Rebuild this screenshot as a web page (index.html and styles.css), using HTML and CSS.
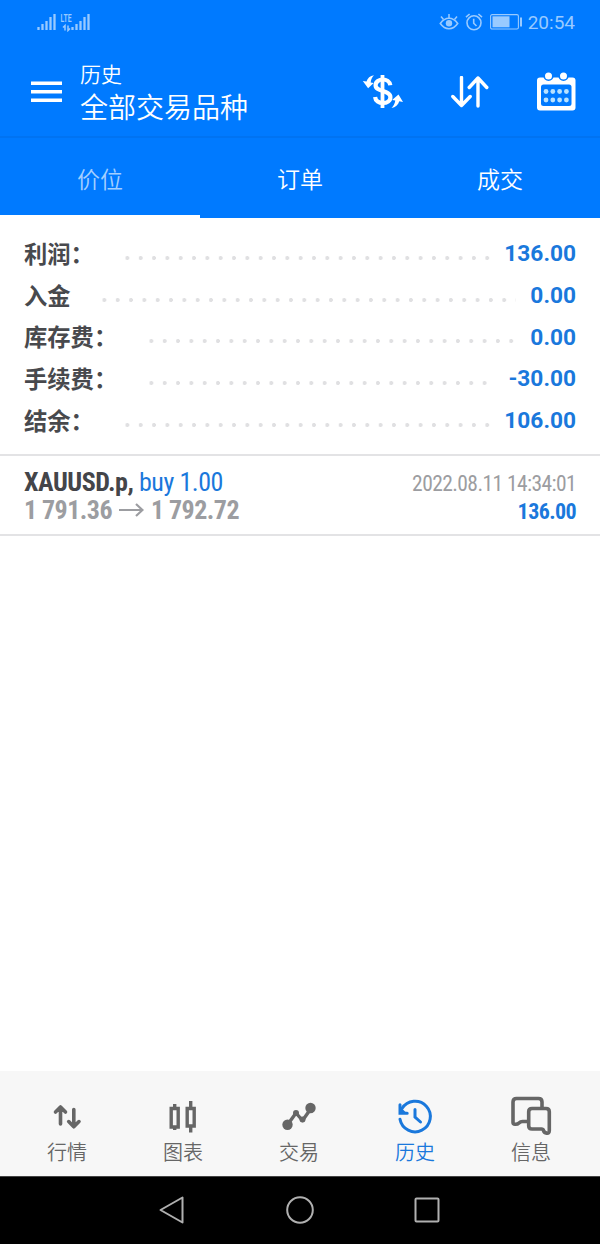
FILE: index.html
```html
<!DOCTYPE html>
<html lang="zh-CN">
<head>
    <meta charset="UTF-8">
    <meta name="viewport" content="width=device-width, initial-scale=1.0">
    <title>历史</title>
    <link rel="stylesheet" href="styles.css">
</head>
<body>

<div class="status-bar">
    <svg class="signal" width="54" height="20" viewBox="0 0 54 20">
        <path d="M1.5 15v3M5.5 12v6M9.5 9v9M13.5 5v13M17.5 2v16" stroke="currentColor" stroke-width="2.3"/>
        <path d="M35.5 15v3M39.5 12v6M43.5 9v9M47.5 5v13M51.5 2v16" stroke="currentColor" stroke-width="2.3"/>
        <path d="M28 18.500v-5l-2 2M31 13.500v5l2-2" fill="none" stroke="currentColor" stroke-width="1.500"/>
        <text class="lte" x="23.500" y="9.500" textLength="11" lengthAdjust="spacingAndGlyphs">LTE</text>
    </svg>
    <div class="status-right">
        <svg width="20" height="18" viewBox="0 0 20 18">
            <path d="M1.3 10.5Q5 5.3 10 5.3t8.7 5.2Q15 15.7 10 15.7t-8.7-5.2z" fill="none" stroke="currentColor" stroke-width="1.6"/>
            <circle cx="10" cy="10.3" r="3.2" fill="currentColor"/>
            <path d="M10 1v4M2 3.5l2.5 3M18 3.5l-2.5 3" stroke="currentColor" stroke-width="1.5"/>
        </svg>
        <svg width="18" height="18" viewBox="0 0 18 18" fill="none" stroke="currentColor" stroke-width="1.6">
            <circle cx="9" cy="9.8" r="7"/>
            <path d="M8.7 5.8v4.4l2.8 2.8M1 4.2L4.6 1M17 4.2L13.4 1"/>
        </svg>
        <svg class="battery" width="32" height="16" viewBox="0 0 32 16">
            <rect x=".6" y=".6" width="27.8" height="14.4" rx="1.5" fill="none" stroke="currentColor" stroke-width="1.1"/>
            <rect x="2.5" y="2.3" width="17" height="11" fill="currentColor"/>
            <rect x="30" y="3.5" width="2" height="9" fill="currentColor"/>
        </svg>
        <span class="clock">20:54</span>
    </div>
</div>

<div class="app-bar">
    <svg width="31" height="22" viewBox="0 0 31 22">
        <path d="M0 2.2h31M0 10.7h31M0 19.2h31" stroke="currentColor" stroke-width="3.4"/>
    </svg>
    <div class="titles">
        <div class="title">历史</div>
        <div class="subtitle">全部交易品种</div>
    </div>
    <div class="actions">
        <svg width="42" height="38" viewBox="0 0 42 38">
            <path d="M28.300 12.300c-.5-4-4-5.800-7.500-5.800s-7.200 2.200-7.200 5.700c0 7.200 14.800 4.600 14.800 12 0 3.800-3.600 5.800-7.400 5.800-4 0-7.600-2-7.900-6" fill="none" stroke="currentColor" stroke-width="4.200"/>
            <path d="M20.500 2v33" stroke="currentColor" stroke-width="3.800"/>
            <path d="M12 2.300C8 3 5.500 5 4.500 8.600L.8 8l5.300 7.300 5.600-5.300-3-.6C9 6.500 10 4.200 12 2.300z" fill="currentColor"/>
            <path d="M29.500 35c4-.7 6.700-3 7.800-6.700l3.700.600-4.500-7.300-6.400 5.300 3.200.600c-.5 3.200-1.800 5.600-3.800 7.500z" fill="currentColor"/>
        </svg>
        <svg width="38" height="32" viewBox="0 0 38 32">
            <path d="M10.500 1.500v28M1.800 20.500l8.700 9 8.700-9M27 30V2M18.200 11.500l8.800-9.500 8.800 9.500" fill="none" stroke="currentColor" stroke-width="3.400" stroke-linecap="round" stroke-linejoin="round"/>
        </svg>
        <svg class="calendar" width="40" height="40" viewBox="0 0 40 40">
            <rect x="1" y="6.500" width="38.500" height="33" rx="3" fill="currentColor"/>
            <rect x="5" y="13.500" width="30.500" height="21.500" rx="2.500" fill="#007aff"/>
            <g fill="currentColor" stroke="#007aff" stroke-width="1.600">
                <circle cx="12.500" cy="5" r="4.300"/>
                <circle cx="27.500" cy="5" r="4.300"/>
            </g>
            <g class="days">
                <circle cx="10" cy="20.500" r="2.400"/><circle cx="16.800" cy="20.500" r="2.400"/><circle cx="23.600" cy="20.500" r="2.400"/><circle cx="30.400" cy="20.500" r="2.400"/>
                <circle cx="10" cy="29" r="2.400"/><circle cx="16.800" cy="29" r="2.400"/><circle cx="23.600" cy="29" r="2.400"/><circle cx="30.400" cy="29" r="2.400"/>
            </g>
        </svg>
    </div>
</div>

<div class="tabs">
    <div class="tab active">价位</div>
    <div class="tab">订单</div>
    <div class="tab">成交</div>
</div>

<div class="summary">
    <div class="row"><span class="label">利润：</span><span class="dots"></span><span class="value">136.00</span></div>
    <div class="row"><span class="label">入金</span><span class="dots"></span><span class="value">0.00</span></div>
    <div class="row"><span class="label">库存费：</span><span class="dots"></span><span class="value">0.00</span></div>
    <div class="row"><span class="label">手续费：</span><span class="dots"></span><span class="value">-30.00</span></div>
    <div class="row"><span class="label">结余：</span><span class="dots"></span><span class="value">106.00</span></div>
</div>

<div class="deal">
    <div class="deal-line">
        <div class="symbol"><b>XAUUSD.p,</b> <span class="side">buy 1.00</span></div>
        <div class="time">2022.08.11 14:34:01</div>
    </div>
    <div class="deal-line">
        <div class="prices">
            <span class="price-open">1 791.36</span>
            <svg width="25" height="14" viewBox="0 0 25 14">
                <path d="M0 7h23.500M17 1l6.500 6-6.500 6" fill="none" stroke="currentColor" stroke-width="2.200"/>
            </svg>
            <span class="price-close">1 792.72</span>
        </div>
        <div class="profit">136.00</div>
    </div>
</div>

<div class="bottom-nav">
    <div class="nav-item">
        <svg width="42" height="40" viewBox="0 0 42 40" fill="none" stroke="currentColor" stroke-width="3.600" stroke-linecap="round" stroke-linejoin="round">
            <path d="M14.500 28V11M9.500 16l5-5 5 5M27.800 13.500v17.300M22.700 25.600l5.100 5.200 5.200-5.200"/>
        </svg>
        <span>行情</span>
    </div>
    <div class="nav-item">
        <svg width="42" height="40" viewBox="0 0 42 40" fill="none" stroke="currentColor" stroke-width="3.400">
            <path d="M9.200 12.500h7v18.500h-7zM12.700 12.500V8M12.700 31v3M25.200 12.500h7V30h-7zM28.700 12.500V5M28.700 30V36.500"/>
        </svg>
        <span>图表</span>
    </div>
    <div class="nav-item">
        <svg width="42" height="40" viewBox="0 0 42 40">
            <path d="M9.500 28.700L18 17l6.500 7.500 8.500-12" fill="none" stroke="currentColor" stroke-width="3.400" stroke-linejoin="round"/>
            <circle cx="9.500" cy="28.700" r="5.200" fill="currentColor"/>
            <circle cx="32.500" cy="12" r="5.200" fill="currentColor"/>
            <circle cx="18" cy="17" r="3" fill="currentColor"/>
            <circle cx="24.500" cy="23.500" r="3" fill="currentColor"/>
        </svg>
        <span>交易</span>
    </div>
    <div class="nav-item active">
        <svg width="42" height="40" viewBox="0 0 42 40" fill="none" stroke="currentColor" stroke-width="3" stroke-linecap="round">
            <path d="M6 23.300A15.300 15.300 0 1 0 8 12.500"/>
            <path d="M6 8.800v8.500h7.200M21 13.500v7.500l5.500 5"/>
            <path d="M5 9.500l8.500 8.500H5z" fill="currentColor" stroke="none"/>
        </svg>
        <span>历史</span>
    </div>
    <div class="nav-item">
        <svg width="42" height="40" viewBox="0 0 42 40" fill="none" stroke="currentColor" stroke-width="3.600" stroke-linejoin="round">
            <path d="M18.500 25.500H12.500q-2 0-3.500 1.500t-4 1.300q-2 0-2-2V6q0-3.500 3.500-3.500h22q3.500 0 3.500 3.500v6"/>
            <path d="M22 12.500H36q3.300 0 3.300 3.300V34.500q0 3-2.600 2.600-2.700-.400-3.200-2.600-.4-1.500-2-1.500H22q-3.300 0-3.300-3.300V15.800q0-3.300 3.300-3.300z"/>
        </svg>
        <span>信息</span>
    </div>
</div>

<div class="system-nav">
    <svg width="28" height="30" viewBox="0 0 28 30">
        <path d="M1.500 15L23.500 2.500v25z" fill="none" stroke="currentColor" stroke-width="2" stroke-linejoin="round"/>
    </svg>
    <svg width="28" height="30" viewBox="0 0 28 30">
        <circle cx="14" cy="15" r="12.800" fill="none" stroke="currentColor" stroke-width="2"/>
    </svg>
    <svg width="28" height="30" viewBox="0 0 28 30">
        <rect x="2.500" y="3.500" width="23" height="23" rx="1" fill="none" stroke="currentColor" stroke-width="2"/>
    </svg>
</div>

</body>
</html>
```
FILE: styles.css
```css
* {
    box-sizing: border-box;
}
body {
    font-family: Roboto, "Noto Sans CJK SC", sans-serif;
    margin: 0;
    width: 600px;
    height: 1244px;
    display: flex;
    flex-direction: column;
    background: #fff;
    overflow: hidden;
}
svg {
    display: block;
    flex: none;
}
.status-bar {
    height: 46px;
    padding: 0 25px 0 37px;
    display: flex;
    justify-content: space-between;
    align-items: center;
    background: #007aff;
    color: #99caff;
}
.signal {
    margin-top: -2px;
}
.lte {
    font-size: 11px;
    font-weight: 600;
    fill: currentColor;
}
.status-right {
    display: flex;
    align-items: center;
    gap: 6px;
}
.status-right svg {
    margin-top: -2px;
}
.battery {
    margin-left: 1px;
}
.clock {
    font-size: 19px;
    line-height: 22px;
}
.app-bar {
    height: 92px;
    padding: 2px 24px 0 31px;
    display: flex;
    align-items: center;
    background: #007aff;
    border-bottom: 2px solid #0073f2;
    color: #fff;
}
.titles {
    margin-left: 18px;
    padding-top: 3px;
    font-weight: 350;
}
.title {
    font-size: 21px;
    line-height: 30px;
}
.subtitle {
    font-size: 28px;
    line-height: 38px;
}
.actions {
    margin-left: auto;
    display: flex;
    align-items: center;
    gap: 47px;
}
.calendar {
    margin-top: -2px;
}
.days {
    fill: #b8e2ff;
}
.tabs {
    height: 80px;
    display: flex;
    background: #007aff;
}
.tab {
    flex: 1;
    padding-top: 3px;
    border-bottom: 3px solid transparent;
    text-align: center;
    font-size: 23px;
    font-weight: 350;
    line-height: 79px;
    height: 80px;
    color: #fff;
}
.tab.active {
    color: #a3cfff;
    border-bottom-color: #fff;
}
.summary {
    height: 238px;
    padding: 15px 24px 0;
    border-bottom: 2px solid #e3e3e5;
}
.row {
    height: 41.700px;
    display: flex;
    align-items: center;
    line-height: 40px;
}
.label {
    padding-top: 2px;
    font-size: 23.300px;
    font-weight: 700;
    color: #48494d;
}
/* each tile holds one dot at its right edge, so a cut tile stays empty */
.dots {
    flex: 1;
    height: 6px;
    margin: 8px 14.500px 0 22.600px;
    background: radial-gradient(circle at 11.300px 3px, #e0e0e2 1.700px, transparent 2.300px) 0 0 / 13.333px 6px repeat-x;
}
.value {
    padding-top: 1px;
    font-size: 22.700px;
    font-weight: 700;
    color: #1a78dc;
}
.deal {
    height: 80px;
    padding: 12px 24px 0;
    border-bottom: 2px solid #e3e3e5;
    font-family: "Roboto Condensed", Roboto, sans-serif;
    font-stretch: 75%;
}
.deal-line {
    height: 28px;
    display: flex;
    justify-content: space-between;
    align-items: center;
    line-height: 28px;
}
.symbol {
    font-size: 26px;
    letter-spacing: -0.450px;
    color: #444549;
}
.side {
    color: #1a78dc;
}
.time {
    padding-top: 4px;
    font-size: 21.500px;
    letter-spacing: -0.580px;
    color: #9c9da1;
}
.prices {
    display: flex;
    align-items: center;
    gap: 7px;
    font-size: 26px;
    font-weight: 700;
    letter-spacing: -0.550px;
    color: #9c9da1;
}
.profit {
    padding-top: 4px;
    font-size: 22px;
    font-weight: 700;
    letter-spacing: -0.600px;
    color: #1a78dc;
}
.bottom-nav {
    height: 106px;
    margin-top: auto;
    padding: 25px 11px 0 9px;
    display: flex;
    background: #f7f7f7;
    border-bottom: 1px solid #444;
}
.nav-item {
    flex: 1;
    display: flex;
    flex-direction: column;
    align-items: center;
    font-size: 20px;
    font-weight: 350;
    line-height: 35px;
    color: #666;
}
.nav-item.active {
    color: #1a78dc;
}
.system-nav {
    height: 67px;
    padding-bottom: 2px;
    display: flex;
    justify-content: center;
    align-items: center;
    gap: 99px;
    background: #000;
    color: #b0b0b0;
}
```
